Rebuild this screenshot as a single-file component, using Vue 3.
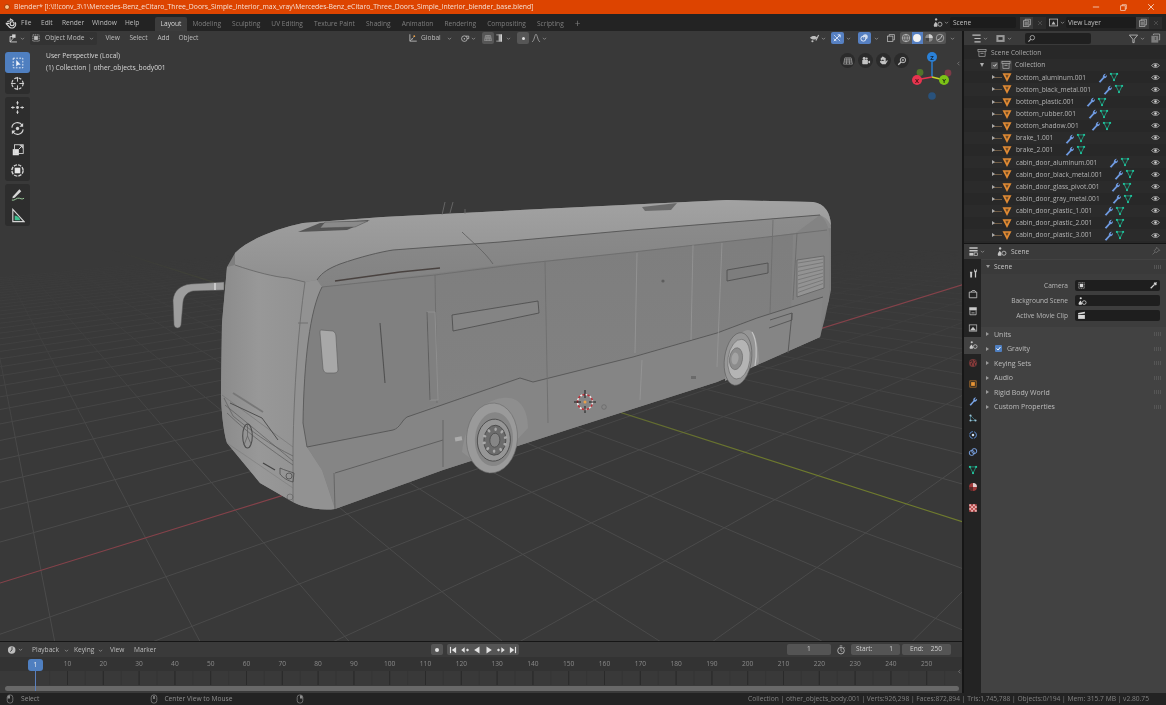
<script setup>
import { h } from 'vue'

const ICONS = {
  blender: '<circle cx="9.5" cy="9" r="2.6" stroke-width="1.5"/><path d="M1 8.5H6M3 6L8 5M6.5 2.5L11 5M13.5 7A5 5 0 1 1 4.8 12.2L1.5 8.8" stroke-width="1.6"/>',
  editor3d: '<path d="M3 13V5H9M3 13H13" stroke-width="1.3"/><rect x="6" y="2" width="5" height="5" fill="currentColor" stroke="none"/><path d="M3 13L8 7" stroke-width="1.2"/>',
  objmode: '<rect x="3" y="3" width="10" height="10" stroke-width="1.2" stroke-dasharray="2 1"/><rect x="5" y="5" width="6" height="6" fill="currentColor" stroke="none"/>',
  global: '<path d="M3 2V13H14" stroke-width="1.4"/><path d="M3 13L9 7" stroke-width="1"/><circle cx="10" cy="5" r="1.5" fill="#e8a04a" stroke="none"/><circle cx="6.5" cy="9.5" r="1" fill="currentColor" stroke="none"/>',
  snap: '<circle cx="7" cy="9" r="4.5" stroke-width="1.3"/><path d="M9 5H14V9H11" stroke-width="1.3"/><circle cx="7" cy="9" r="1.2" fill="currentColor" stroke="none"/>',
  curve: '<path d="M1.5 14C5 14 6 2 8 2S11 14 14.5 14" stroke-width="1.1"/>',
  grab: '<path d="M2 3H6M2 13H6" stroke-width="1.2"/><rect x="6" y="2" width="5" height="12" fill="#e6e6e6" stroke="none"/><path d="M8 1V15" stroke="#333" stroke-width="1"/>',
  gizview: '<path d="M1.5 7C4 3.5 10 3.5 12 7C10 10.5 4 10.5 1.5 7Z" fill="currentColor" stroke="none"/><path d="M10 11L14 3" stroke-width="1.6"/><circle cx="5" cy="12" r="1.6" fill="currentColor" stroke="none"/>',
  overlay: '<circle cx="7" cy="9" r="4" stroke-width="1.5"/><circle cx="10" cy="6" r="4" fill="#cfdcf0" stroke="none"/><circle cx="8.5" cy="8" r="1.6" fill="#5d7fb8" stroke="none"/>',
  arrows: '<path d="M3 13L13 3M9 3H13V7M3 9L7 13" stroke-width="1.5"/><path d="M3 3L13 13" stroke-width="1.1"/>',
  xray: '<rect x="2.5" y="5" width="8.5" height="8.5" stroke-width="1.2"/><path d="M5 5V2.5H13.5V11H11" stroke-width="1.2"/>',
  wire: '<circle cx="8" cy="8" r="6" stroke-width="1.1"/><path d="M2 8H14M8 2C5 5 5 11 8 14M8 2C11 5 11 11 8 14" stroke-width=".9"/>',
  solid: '<circle cx="8" cy="8" r="6.3" fill="#f2f2f2" stroke="none"/>',
  matprev: '<circle cx="8" cy="8" r="6" fill="#8b8b8b" stroke="none"/><path d="M8 2A6 6 0 0 1 14 8H8Z" fill="#d0d0d0" stroke="none"/><path d="M2 8A6 6 0 0 0 8 14V8Z" fill="#444" stroke="none"/>',
  rendered: '<circle cx="8" cy="8" r="6" fill="#555" stroke-width="1"/><path d="M4 11C8 10 10 8 11 4" stroke-width="1.4"/>',
  grid: '<path d="M3 3H13L15 13H1ZM6.3 3L5.5 13M9.6 3L10.5 13M2.4 6.3H13.6M1.7 9.6H14.3" stroke-width=".9"/>',
  camera: '<rect x="2" y="6" width="9" height="7" rx="1" fill="currentColor" stroke="none"/><circle cx="5" cy="4" r="2.3" fill="currentColor" stroke="none"/><circle cx="9" cy="4" r="1.8" fill="currentColor" stroke="none"/><path d="M11 9L14.5 7V12L11 10Z" fill="currentColor" stroke="none"/>',
  hand: '<path d="M4 8V4.5a.9.9 0 0 1 1.8 0V8M5.8 7V3a.9.9 0 0 1 1.8 0V7M7.6 7V3.3a.9.9 0 0 1 1.8 0V8M9.4 8V4.8a.9.9 0 0 1 1.8 0V10L13 7.8C14 7.5 14.3 8.5 13.8 9L11 13.5H6L3 10.5C2.5 9.5 3.3 8.5 4 9Z" fill="currentColor" stroke="none"/>',
  zoom: '<circle cx="9.5" cy="6.5" r="4.3" stroke-width="1.5"/><path d="M6.5 9.5L2 14" stroke-width="2"/><path d="M7.5 6.5H11.5M9.5 4.5V8.5" stroke-width="1.2"/>',
  select: '<rect x="2.5" y="2.5" width="11" height="11" stroke-width="1" stroke-dasharray="2 1.5"/><path d="M6 4.5V12L8 10H11Z" fill="currentColor" stroke="none"/>',
  cursor: '<circle cx="8" cy="8" r="6" stroke-width="1.2" stroke-dasharray="3 1.8"/><path d="M8 1V6M8 10V15M1 8H6M10 8H15" stroke-width="1"/>',
  move: '<path d="M8 5V1.5M8 11V14.5M5 8H1.5M11 8H14.5" stroke-width="1"/><path d="M8 1L6.5 3.5H9.5ZM8 15L6.5 12.5H9.5ZM1 8L3.5 6.5V9.5ZM15 8L12.5 6.5V9.5Z" fill="currentColor" stroke="none"/><circle cx="8" cy="8" r="1.5" fill="currentColor" stroke="none"/>',
  rotate: '<path d="M2 7A6 6 0 0 1 13 4.5M14 9A6 6 0 0 1 3 11.5" stroke-width="1.2"/><path d="M14 2V6H10ZM2 14V10H6Z" fill="currentColor" stroke="none"/><circle cx="8" cy="8" r="1.8" fill="currentColor" stroke="none"/>',
  scale: '<rect x="2" y="7" width="7" height="7" fill="#e2e2e2" stroke="none"/><rect x="4" y="2" width="10" height="10" stroke-width="1"/><path d="M9 7L13 3M10 3H13V6" stroke-width="1.1"/>',
  transform: '<circle cx="8" cy="8" r="6" stroke-width="1.5" stroke-dasharray="3.5 1.2"/><rect x="5" y="5" width="6" height="6" fill="#e6e6e6" stroke="none"/>',
  annotate: '<path d="M3 10L10 2.5L12 4.5L5 11.5L2.5 12Z" fill="currentColor" stroke="none"/><path d="M2 14C5 15 7 11 10 12S13 13 15 12" stroke="#9fd0a0" stroke-width="1"/>',
  measure: '<path d="M3 1.5V14.5H15Z" stroke-width="1.2"/><path d="M5 8A7 7 0 0 1 11 13H5Z" fill="#3fbf8f" stroke="none"/>',
  mesh: '<path d="M3 3.2H13L8 13Z" stroke-width="2.7" stroke-linejoin="miter" fill="#6d4a25"/>',
  meshData: '<path d="M3 3H13L8 13Z" stroke-width="1.1"/><g fill="currentColor" stroke="none"><rect x="1.5" y="1.5" width="3" height="3"/><rect x="11.5" y="1.5" width="3" height="3"/><rect x="6.5" y="11.5" width="3" height="3"/></g>',
  wrench: '<path d="M2.5 14L8.5 7.5C8 5.5 9.5 2.5 13 2.5L10.8 5L12 6.5L14.5 4.5C14.8 7.5 12.5 9.5 10.5 9L4.8 15.5Z" fill="currentColor" stroke="none"/>',
  eye: '<path d="M1.2 8C4 3.5 12 3.5 14.8 8C12 12.5 4 12.5 1.2 8Z" stroke-width="1.3"/><circle cx="8" cy="8" r="2.3" fill="currentColor" stroke="none"/>',
  collection: '<rect x="1.5" y="2.5" width="13" height="3" stroke-width="1.1"/><path d="M3 5.5V13.5H13V5.5" stroke-width="1.1"/><path d="M5.5 8.5H10.5" stroke-width="1.3"/>',
  outl: '<path d="M2 3H14M5 8H14M5 13H14" stroke-width="1.8"/>',
  layers: '<rect x="2" y="3" width="12" height="10" fill="currentColor" stroke="none" opacity=".75"/><rect x="5" y="6" width="6" height="4" fill="#333" stroke="none"/>',
  mag: '<circle cx="9.5" cy="6.5" r="4" stroke-width="1.3"/><path d="M6.5 9.5L2.5 13.5" stroke-width="1.8"/>',
  filter: '<path d="M2 3H14L9 9V14H7V9Z" stroke-width="1.2"/>',
  newc: '<rect x="2" y="4" width="10" height="10" fill="currentColor" stroke="none" opacity=".55"/><path d="M5 3V1.5H14V10H12.5" stroke-width="1.1"/><path d="M7 7H9M7 9H9" stroke="#222" stroke-width="1"/>',
  newdoc: '<rect x="2.5" y="4.5" width="8.5" height="9" stroke-width="1.1"/><path d="M5 4.5V2H13.5V11H11" stroke-width="1.1"/><rect x="4" y="6" width="5.5" height="6" fill="currentColor" stroke="none" opacity=".5"/>',
  x: '<path d="M4 4L12 12M12 4L4 12" stroke-width="1.3"/>',
  scene: '<path d="M3 14C1.5 11 4 9 5.5 7C7 9 9 11 7.5 14Z" fill="currentColor" stroke="none"/><circle cx="6" cy="3.5" r="1.7" fill="currentColor" stroke="none"/><circle cx="11.5" cy="10.5" r="3" stroke-width="1.2"/>',
  viewlayer: '<rect x="2" y="3" width="12" height="10" stroke-width="1.1"/><path d="M5 11L8 6L11 11Z" fill="currentColor" stroke="none"/>',
  props: '<path d="M2 3H14M2 7H14" stroke-width="2.2"/><rect x="2" y="10" width="6" height="4" fill="currentColor" stroke="none"/><rect x="9" y="10" width="5" height="4" stroke-width="1"/>',
  pin: '<path d="M9 2L14 7L11 8L8.5 11L5 7.5L8 5ZM6.5 9.5L2.5 13.5" stroke-width="1.1"/>',
  tool: '<path d="M5 1V6M3 6H7L6.5 9V15H3.5V9ZM11 1C9 3 9.5 6 11 7V15H13V7C14.5 6 15 3 13 1V4.5H11Z" fill="currentColor" stroke="none"/>',
  render: '<path d="M2 5H14V14H2ZM5 5L7 2.5H11L12.5 5" stroke-width="1.3"/>',
  output: '<path d="M2 2H14V7H2Z" fill="currentColor" stroke="none"/><path d="M3 7V14H13V7M5.5 11H10.5" stroke-width="1.2"/>',
  vlayer: '<rect x="2" y="3" width="12" height="10" stroke-width="1.1"/><path d="M3 12L8 6L13 12" fill="currentColor" stroke="none"/>',
  world: '<circle cx="8" cy="8" r="6.3" fill="#8a3a3a" stroke="#333" stroke-width=".5"/><path d="M3 6L7 4L8 7L5 9L6 12M10 3L13 6L10 9L11 13" stroke="#222" stroke-width="1.3"/>',
  object: '<rect x="3" y="3" width="10" height="10" stroke="#d98a2f" stroke-width="1"/><rect x="5" y="5" width="6" height="6" fill="#e89535" stroke="none"/>',
  modifier: '<path d="M2.5 14L8.5 7.5C8 5 9.5 2 13 2.5L10.5 5L11.5 6.5L14.5 4.5C15 7.5 12.5 9.8 10 9L4.5 15.5Z" fill="#79a4e6" stroke="none"/>',
  particles: '<path d="M4 4L12 12M4 4V12H12" stroke="#4d8fa0" stroke-width="1"/><g fill="#9cc3d6" stroke="none"><circle cx="4" cy="4" r="1.7"/><circle cx="12" cy="12" r="1.7"/><circle cx="4" cy="12" r="1.7"/></g>',
  physics: '<circle cx="8" cy="8" r="5.5" stroke="#5d8fd8" stroke-width="1.5" stroke-dasharray="7 2"/><circle cx="8" cy="8" r="2" fill="#cfe0f5" stroke="none"/>',
  constraints: '<circle cx="6" cy="9.5" r="4" stroke="#7da7ea" stroke-width="1.5"/><circle cx="10" cy="6.5" r="4" stroke="#7da7ea" stroke-width="1.5"/>',
  data: '<path d="M3 3H13L8 13Z" stroke="#22c7a0" stroke-width="1"/><g fill="#22c7a0" stroke="none"><rect x="1.5" y="1.5" width="3" height="3"/><rect x="11.5" y="1.5" width="3" height="3"/><rect x="6.5" y="11.5" width="3" height="3"/></g>',
  material: '<circle cx="8" cy="8" r="6.3" fill="#a03a3a" stroke="none"/><path d="M8 1.7A6.3 6.3 0 0 1 14.3 8H8Z" fill="#e0d0d0" stroke="none"/><path d="M1.7 8A6.3 6.3 0 0 0 8 14.3V8Z" fill="#5a2a2a" stroke="none"/>',
  texture: '<rect x="2" y="2" width="12" height="12" fill="#b84a4a" stroke="none"/><g fill="#e5b0b0" stroke="none"><rect x="2" y="2" width="3" height="3"/><rect x="8" y="2" width="3" height="3"/><rect x="5" y="5" width="3" height="3"/><rect x="11" y="5" width="3" height="3"/><rect x="2" y="8" width="3" height="3"/><rect x="8" y="8" width="3" height="3"/><rect x="5" y="11" width="3" height="3"/><rect x="11" y="11" width="3" height="3"/></g>',
  camdata: '<rect x="3" y="3" width="10" height="10" stroke-width="1" stroke-dasharray="2 1"/><rect x="5" y="5" width="6" height="6" fill="currentColor" stroke="none"/>',
  dropper: '<path d="M3 13L10 6" stroke-width="2.2"/><path d="M9 3L13 7M11 5L13.5 2.5" stroke-width="2.4"/>',
  clip: '<rect x="2" y="7" width="12" height="7" fill="currentColor" stroke="none"/><path d="M2 3.5L14 1.5V4.5L2 6Z" fill="currentColor" stroke="none"/>',
  timeline: '<circle cx="7.5" cy="8" r="6" fill="currentColor" stroke="none"/><path d="M8 3.5V8L5 10.5" stroke="#333" stroke-width="1.4"/>',
  record: '<circle cx="8" cy="8" r="3.2" fill="currentColor" stroke="none"/>',
  first: '<path d="M4 3V13" stroke-width="1.8"/><path d="M13 3V13L6 8Z" fill="currentColor" stroke="none"/>',
  prevk: '<path d="M7.5 3.5V12.5L2 8ZM9.5 8L12 5.5L14.5 8L12 10.5Z" fill="currentColor" stroke="none"/>',
  back: '<path d="M12 2.5V13.5L3.5 8Z" fill="currentColor" stroke="none"/>',
  play: '<path d="M4 2.5V13.5L12.5 8Z" fill="currentColor" stroke="none"/>',
  nextk: '<path d="M8.5 3.5V12.5L14 8ZM1.5 8L4 5.5L6.5 8L4 10.5Z" fill="currentColor" stroke="none"/>',
  last: '<path d="M12 3V13" stroke-width="1.8"/><path d="M3 3V13L10 8Z" fill="currentColor" stroke="none"/>',
  stopwatch: '<circle cx="8" cy="9" r="5.3" stroke-width="1.2"/><path d="M6 1.5H10M8 5V9L10.5 11.5M12.5 3.5L14 5" stroke-width="1.1"/>',
  mouseL: '<rect x="3.5" y="1.5" width="9" height="13" rx="4" stroke-width="1.1"/><path d="M3.8 7H8V1.8C5 1.8 3.8 3.5 3.8 7Z" fill="currentColor" stroke="none"/>',
  mouseM: '<rect x="3.5" y="1.5" width="9" height="13" rx="4" stroke-width="1.1"/><rect x="6.8" y="3" width="2.4" height="5" fill="currentColor" stroke="none"/>',
  mouseR: '<rect x="3.5" y="1.5" width="9" height="13" rx="4" stroke-width="1.1"/><path d="M12.2 7H8V1.8C11 1.8 12.2 3.5 12.2 7Z" fill="currentColor" stroke="none"/>',
  min: '<path d="M3 8H13" stroke-width="1.2"/>',
  restore: '<rect x="3" y="5" width="8" height="8" stroke-width="1.2"/><path d="M5.5 5V3H13V10.5H11" stroke-width="1.2"/>',
  close: '<path d="M3.5 3.5L12.5 12.5M12.5 3.5L3.5 12.5" stroke-width="1.3"/>',
  chev: '<path d="M4.5 6.5L8 10L11.5 6.5" stroke-width="1.7"/>',
  left: '<path d="M10 4L6 8L10 12" stroke-width="1.5"/>',
  checked: '<path d="M3.5 8L7 11.5L12.5 4.5" stroke-width="2.2"/>',
}
const Ico = (props) => h('svg', {
  viewBox: '0 0 16 16',
  width: props.size || 12,
  height: props.size || 12,
  fill: 'none',
  stroke: 'currentColor',
  innerHTML: ICONS[props.name],
})
Ico.props = ['name', 'size']

const menus = ['File', 'Edit', 'Render', 'Window', 'Help']
const workspaces = ['Layout', 'Modeling', 'Sculpting', 'UV Editing', 'Texture Paint', 'Shading', 'Animation', 'Rendering', 'Compositing', 'Scripting']
const objects = ['bottom_aluminum.001', 'bottom_black_metal.001', 'bottom_plastic.001', 'bottom_rubber.001', 'bottom_shadow.001', 'brake_1.001', 'brake_2.001', 'cabin_door_aluminum.001', 'cabin_door_black_metal.001', 'cabin_door_glass_pivot.001', 'cabin_door_gray_metal.001', 'cabin_door_plastic_1.001', 'cabin_door_plastic_2.001', 'cabin_door_plastic_3.001']
const tabs = [['tool', 0], ['render', 1], ['output', 0], ['vlayer', 0], ['scene', 0], ['world', 0], ['object', 1], ['modifier', 0], ['particles', 0], ['physics', 0], ['constraints', 0], ['data', 0], ['material', 0], ['texture', 1]]
const panels = ['Units', 'Gravity', 'Keying Sets', 'Audio', 'Rigid Body World', 'Custom Properties']

// Ground grid: a homography built from the two vanishing points of the floor.
const O = [586, 401], V1 = [1412, 145], V2 = [-30, 204], A = 0.0497, B = 0.0685
const proj = (u, v) => {
  const s = u * A, t = v * B, w = 1 + s + t
  return [(O[0] + s * V1[0] + t * V2[0]) / w, (O[1] + s * V1[1] + t * V2[1]) / w]
}
const seg = (p, q) => `M${p[0].toFixed(1)} ${p[1].toFixed(1)}L${q[0].toFixed(1)} ${q[1].toFixed(1)}`
const gridD = (() => {
  let d = ''
  for (let v = -13; v <= 34; v++) {
    if (v === 0) continue
    const umin = (0.06 - 1 - v * B) / A
    d += seg(proj(umin, v), proj(60, v))
  }
  for (let u = -18; u <= 60; u++) {
    if (u === 0) continue
    const vmin = (0.06 - 1 - u * A) / B
    d += seg(proj(u, vmin), proj(u, 34))
  }
  return d
})()

const frameX = (n) => 31.7 + 3.58 * n
const labels = Array.from({ length: 25 }, (_, i) => (i + 1) * 10)
const tickD = (() => {
  let d = ''
  for (let n = 5; n <= 255; n += 5) d += `M${frameX(n).toFixed(1)} 0V14`
  return d
})()
const majorD = labels.map((n) => `M${frameX(n).toFixed(1)} 0V14`).join('')
const spokes = Array.from({ length: 10 }, (_, i) => i * 36)
const vents = Array.from({ length: 8 }, (_, i) => i)
</script>

<template>
  <div class="app">
    <div class="title">
      <span class="bl-dot"></span>
      <span class="title-text">Blender* [I:\!!!conv_3\1\Mercedes-Benz_eCitaro_Three_Doors_Simple_Interior_max_vray\Mercedes-Benz_eCitaro_Three_Doors_Simple_Interior_blender_base.blend]</span>
      <div class="winbtns">
        <Ico name="min" :size="10" /><Ico name="restore" :size="9" /><Ico name="close" :size="10" />
      </div>
    </div>

    <div class="topbar">
      <Ico class="logo" name="blender" :size="12" />
      <div class="menus"><span v-for="m in menus" :key="m">{{ m }}</span></div>
      <div class="workspaces">
        <span v-for="(w, i) in workspaces" :key="w" :class="{ on: i === 0 }">{{ w }}</span>
        <span class="plus">+</span>
      </div>
      <div class="top-right">
        <Ico name="scene" :size="11" /><Ico class="chev" name="chev" :size="7" />
        <div class="tfield scene-f">Scene</div>
        <div class="sq"><Ico name="newdoc" :size="10" /></div><div class="sq dim"><Ico name="x" :size="8" /></div>
        <Ico class="vl" name="viewlayer" :size="11" /><Ico class="chev" name="chev" :size="7" />
        <div class="tfield layer-f">View Layer</div>
        <div class="sq"><Ico name="newdoc" :size="10" /></div><div class="sq dim"><Ico name="x" :size="8" /></div>
      </div>
    </div>

    <div class="main">
      <div class="left">
        <div class="viewport">
          <svg class="scene3d" viewBox="0 31 962 610" width="962" height="610">
            <defs>
              <linearGradient id="fade" gradientUnits="userSpaceOnUse" x1="0" y1="250" x2="0" y2="470">
                <stop offset="0" stop-color="#000" />
                <stop offset="1" stop-color="#fff" />
              </linearGradient>
              <mask id="gridmask" maskUnits="userSpaceOnUse" x="0" y="31" width="962" height="610">
                <rect x="0" y="31" width="962" height="610" fill="url(#fade)" />
              </mask>
              <linearGradient id="front" x1="0" y1="0" x2="1" y2="0">
                <stop offset="0" stop-color="#8b8b8b" />
                <stop offset=".45" stop-color="#989898" />
                <stop offset="1" stop-color="#929292" />
              </linearGradient>
              <linearGradient id="roofg" x1="0" y1="0" x2="0" y2="1">
                <stop offset="0" stop-color="#a2a2a2" />
                <stop offset="1" stop-color="#8f8f8f" />
              </linearGradient>
              <linearGradient id="cant" x1="0" y1="0" x2="0" y2="1">
                <stop offset="0" stop-color="#8c8c8c" />
                <stop offset="1" stop-color="#828282" />
              </linearGradient>
              <linearGradient id="side" x1="0" y1="0" x2="0" y2="1">
                <stop offset="0" stop-color="#7d7d7d" />
                <stop offset="1" stop-color="#848484" />
              </linearGradient>
              <filter id="soft" x="-5%" y="-5%" width="110%" height="110%"><feGaussianBlur stdDeviation=".3" /></filter>
            </defs>

            <path class="gridl" :d="gridD" mask="url(#gridmask)" />
            <path d="M0 583L963 284.5" stroke="#85424a" stroke-width="1.1" fill="none" />
            <path d="M0 214L963 522" stroke="#6f7b2e" stroke-width="1.1" fill="none" mask="url(#gridmask)" />

            <g filter="url(#soft)">
              <!-- mirror arm -->
              <path d="M224 282L191 284C180 285 174 291 173 300L174 325C175 329 180 329 181 325L183 302C184 295 188 292 193 291L224 290Z" fill="#9d9d9d" stroke="#555" stroke-width=".5" />
              <rect x="214" y="283" width="2" height="7" fill="#c9c9c9" />
              <!-- body silhouette -->
              <path d="M235 253C250 238 280 228 303 223L383 217L520 210L727 200L813 202C825 204 830 212 831 225L831 290L825 318L820 337L757 365L717 382L573 428L443 470L335 509C320 511 302 507 293 502L260 483L227 443C222 425 221 400 221 390L222 323L227 267Z" fill="url(#side)" />
              <!-- roof -->
              <path d="M235 253C250 238 280 228 303 223L383 217L520 210L727 200L813 202C825 204 830 212 831 225L820 215L633 230L500 242L393 250C360 257 335 265 327 270L317 280L305 282L288 278C270 277 250 270 235 265Z" fill="url(#roofg)" />
              <!-- cant rail band -->
              <path d="M317 280L327 270C335 265 360 257 393 250L500 242L633 230L820 215C827 218 830 222 831 228L767 237L633 252L500 265L437 273L322 287Z" fill="url(#cant)" />
              <path d="M820 215C826 220 830 228 830 240L829 300L823 318L820 337L790 350L793 235Z" fill="#838383" />
              <!-- front -->
              <path d="M227 267L235 265C255 272 275 277 288 278L305 282C298 330 294 390 293 447V502L260 483L227 443C222 425 221 400 221 390L222 323Z" fill="url(#front)" />
              <!-- pillar -->
              <path d="M305 282L317 280L322 287C310 310 304 360 303 423L307 447L322 470L335 509C320 511 302 507 293 502V447C294 390 298 330 305 282Z" fill="#929292" />
              <!-- front door panel -->
              <path d="M322 287L435 275L437 403L407 417L393 430L307 447L303 423C304 360 310 310 322 287Z" fill="#808080" />
              <!-- lower skirt -->
              <path d="M307 447L393 430L407 417L520 378L533 382L633 357L717 333L757 318L823 297L820 337L757 365L717 382L573 428L443 470L335 509L322 470Z" fill="#858585" />
              <!-- wheel arches -->
              <path d="M462 452C466 422 480 400 503 398C520 396 528 410 528 428L517 440L470 458Z" fill="#8e8e8e" />
              <path d="M725 381C727 352 735 332 748 330C755 330 758 342 759 362L757 365Z" fill="#959595" />

              <!-- seams -->
              <g fill="none" stroke="#4d4d4d" stroke-width=".9">
                <path d="M235 265C255 272 275 277 288 278L305 282" stroke="#6a6a6a" />
                <path d="M317 280C322 272 330 268 340 264C360 257 380 252 393 250L500 242L633 230L820 215" stroke="#5a5a5a" stroke-width="1" />
                <path d="M322 287L435 275L520 264L633 252L767 237L827 230" stroke="#6c6c6c" />
                <path d="M335 281L400 272L440 268" stroke="#4a4340" stroke-width="1.3" />
                <path d="M307 447L393 430C400 428 402 420 407 417L520 378L533 382L633 357L717 333L757 318L823 297" stroke="#555" stroke-width=".9" />
                <path d="M322 287C310 310 304 360 303 423L307 447" stroke="#595959" />
                <path d="M305 282C298 330 294 390 293 447V502" stroke="#6e6e6e" />
                <path d="M298 323H308" stroke="#6e6e6e" />
                <path d="M435 275L437 403" stroke="#6c6c6c" />
                <path d="M335 473L443 440" stroke="#5a5a5a" />
                <path d="M443 420V467" stroke="#626262" />
                <path d="M334 473L335 509" stroke="#626262" />
                <path d="M545 262L548 423" stroke="#6e6e6e" />
                <path d="M637 253L635 353M642 360L640 400" stroke="#9a9a9a" stroke-width=".7" />
                <path d="M693 245L691 340" stroke="#9a9a9a" stroke-width=".7" />
                <path d="M722 243L717 367" stroke="#9a9a9a" stroke-width=".7" />
                <path d="M773 220L770 313" stroke="#6f6f6f" />
                <path d="M797 233L793 300" stroke="#6b6b6b" />
                <path d="M792 313L788 353" stroke="#555" />
                <path d="M770 320L792 313V320L769 328" stroke="#555" />
                <path d="M462 232C470 240 485 252 493 264" stroke="#626262" />
                <path d="M380 323L385 383" stroke="#505050" stroke-width="1.1" />
                <path d="M222 395L293 447" stroke="#6c6c6c" stroke-width=".5" />
              </g>

              <!-- roof hatch + antennas -->
              <path d="M298 232L320 223L370 220L347 230Z" fill="#555" />
              <path d="M325 222L368 221L355 227L320 228Z" fill="#8a8a8a" stroke="#444" stroke-width=".4" />
              <path d="M642 207L677 203L671 210L645 211Z" fill="#6b6b6b" />
              <path d="M442 215L445 202M450 213L453 202M465 214V209" stroke="#777" stroke-width=".7" fill="none" />

              <!-- recessed window strips -->
              <path d="M452 315L538 301L539 313L453 331Z" fill="#848484" stroke="#505050" stroke-width=".9" />
              <path d="M727 270L768 263V273L727 281Z" fill="#7d7d7d" stroke="#505050" stroke-width=".9" />
              <path d="M427 312L435 312L438 400L430 400Z" fill="#808080" stroke="#8f8f8f" stroke-width="1" />
              <path d="M427 312L430 400" stroke="#525252" stroke-width=".8" />

              <!-- rear vent -->
              <path d="M797 260L824 256V288L797 297Z" fill="#939393" stroke="#626262" stroke-width=".8" />
              <path v-for="i in vents" :key="i" :d="`M798 ${263 + i * 4.2}L823 ${259 + i * 3.5}`" stroke="#727272" stroke-width=".8" fill="none" />

              <!-- side repeater -->
              <path d="M321 330L333 331C335 332 336 334 336 337L338 370C338 372 336 373 334 373L327 373C325 373 324 372 323 369L320 333C320 331 320 330 321 330Z" fill="#a8a8a8" stroke="#5a5a5a" stroke-width=".6" />

              <!-- grille and front details -->
              <g fill="none" stroke="#5c5c5c" stroke-width=".7">
                <path d="M224 398L233 416C250 430 270 445 293 456" />
                <path d="M225 405C250 425 270 442 293 461M227 413C250 435 270 449 293 465" />
                <path d="M233 393L263 412" stroke="#777" stroke-width="1.8" />
                <path d="M230 403L262 418L278 440" stroke="#4f4f4f" stroke-width="1" />
                <ellipse cx="247.5" cy="436" rx="4.8" ry="12" stroke="#4d4d4d" stroke-width="1.1" />
                <path d="M247.5 424V436L244 445M247.5 436L251 444" stroke-width=".7" />
                <path d="M227 443L293 488" stroke="#777" stroke-width=".5" />
                <path d="M263 463L275 470" stroke="#444" stroke-width="1.2" />
                <path d="M280 468C284 470 291 472 294 473L293 482C288 481 282 477 280 474Z" stroke="#444" />
                <circle cx="289" cy="476" r="3" stroke="#444" />
                <circle cx="290" cy="497" r="3" stroke="#666" />
              </g>

              <!-- small door handles -->
              <rect x="455" y="437" width="7" height="4" fill="#ababab" transform="rotate(-10 458 439)" />
              <circle cx="663" cy="281" r="1.6" fill="#5d5d5d" />
              <rect x="691" y="376" width="5" height="3" fill="#6a6a6a" />
              <circle cx="604" cy="407" r="2.3" fill="none" stroke="#666" stroke-width=".7" />

              <!-- front wheel -->
              <g transform="rotate(4 492 438)">
                <ellipse cx="492" cy="438" rx="25.5" ry="35" fill="#9a9a9a" stroke="#6a6a6a" stroke-width=".6" />
                <ellipse cx="494" cy="439" rx="19" ry="27" fill="#868686" />
                <ellipse cx="494" cy="440" rx="16.5" ry="21" fill="#969696" stroke="#4a4a4a" stroke-width=".9" />
                <ellipse cx="495" cy="440" rx="11" ry="15" fill="#6c6c6c" stroke="#454545" stroke-width=".8" />
                <g fill="#a8a8a8">
                  <ellipse v-for="a in spokes" :key="a" cx="495" cy="440" rx="1.3" ry="1.8" :transform="`rotate(${a} 495 440) translate(0 -11)`" />
                </g>
                <ellipse cx="495" cy="440" rx="5" ry="7" fill="#868686" stroke="#4a4a4a" stroke-width=".8" />
              </g>

              <!-- rear wheel -->
              <g transform="rotate(8 738 359)">
                <ellipse cx="738" cy="359" rx="13.5" ry="26.5" fill="#979797" stroke="#5a5a5a" stroke-width=".6" />
                <ellipse cx="739" cy="359" rx="11" ry="20" fill="#b4b4b4" stroke="#666" stroke-width=".6" />
                <ellipse cx="736" cy="359" rx="6.5" ry="11" fill="#8c8c8c" stroke="#666" stroke-width=".6" />
                <ellipse cx="735" cy="359" rx="3.5" ry="6" fill="#a3a3a3" />
              </g>
              <path d="M752 332C757 340 757 355 755 366" stroke="#c4c4c4" stroke-width="1.2" fill="none" />
            </g>

            <!-- 3D cursor -->
            <g fill="none">
              <circle cx="585" cy="402" r="7.5" stroke="#f0e6e6" stroke-width="1.5" stroke-dasharray="2.5 2.5" />
              <circle cx="585" cy="402" r="7.5" stroke="#c0303a" stroke-width="1.5" stroke-dasharray="2.5 2.5" stroke-dashoffset="2.5" />
              <path d="M585 390V398M585 406V413M574 402H581M589 402H596" stroke="#1c1c1c" stroke-width="1" />
              <circle cx="585" cy="402" r="1.5" fill="#e8a04a" />
            </g>

            <!-- navigation gizmo -->
            <g class="gizmo">
              <path d="M932 77V62" stroke="#2a81d8" stroke-width="1.4" />
              <path d="M932 77L921 79" stroke="#e8344f" stroke-width="1.4" />
              <path d="M932 77L940 79" stroke="#c8d428" stroke-width="1.4" />
              <circle cx="932" cy="96" r="3.8" fill="#29527c" />
              <circle cx="920" cy="72.5" r="3.4" fill="#52752b" />
              <circle cx="948" cy="73" r="3.4" fill="#7d3b47" />
              <circle cx="932" cy="57" r="5" fill="#2a81d8" />
              <circle cx="917" cy="80" r="5" fill="#e8344f" />
              <circle cx="944" cy="80" r="5" fill="#7cc216" />
              <text x="932" y="59.5" fill="#123">Z</text>
              <text x="917" y="82.5" fill="#411">X</text>
              <text x="944" y="82.5" fill="#231">Y</text>
            </g>
          </svg>

          <!-- header overlay -->
          <div class="vp-header">
            <Ico class="ed3d" name="editor3d" :size="11" /><Ico class="chev" name="chev" :size="7" />
            <div class="modebtn"><Ico name="objmode" :size="10" /><span>Object Mode</span><Ico class="chev" name="chev" :size="7" /></div>
            <div class="vmenu"><span>View</span><span>Select</span><span>Add</span><span>Object</span></div>
            <div class="hcenter">
              <Ico name="global" :size="10" /><span class="glob">Global</span><Ico class="chev gc" name="chev" :size="7" />
              <Ico class="sn" name="snap" :size="10" /><Ico class="chev" name="chev" :size="7" />
              <div class="greybox bx1"><Ico name="grid" :size="8" /></div>
              <Ico class="gr" name="grab" :size="10" /><Ico class="chev" name="chev" :size="7" />
              <div class="greybox bx2"><span class="dotc"></span></div>
              <Ico class="cv" name="curve" :size="10" /><Ico class="chev" name="chev" :size="7" />
            </div>
            <div class="hright">
              <Ico name="gizview" :size="11" /><Ico class="chev" name="chev" :size="7" />
              <div class="bluebtn b1"><Ico name="arrows" :size="10" /></div><Ico class="chev c1" name="chev" :size="7" />
              <div class="bluebtn b2"><Ico name="overlay" :size="10" /></div><Ico class="chev c2" name="chev" :size="7" />
              <Ico class="xr" name="xray" :size="10" />
              <div class="shadeseg">
                <span><Ico name="wire" :size="10" /></span>
                <span class="act"><Ico name="solid" :size="10" /></span>
                <span><Ico name="matprev" :size="10" /></span>
                <span><Ico name="rendered" :size="10" /></span>
              </div>
              <Ico class="chev c3" name="chev" :size="7" />
            </div>
          </div>

          <div class="vp-info">
            <div>User Perspective (Local)</div>
            <div>(1) Collection | other_objects_body001</div>
          </div>

          <div class="tools">
            <div class="tgroup">
              <div class="tool active"><Ico name="select" :size="14" /></div>
              <div class="tool"><Ico name="cursor" :size="15" /></div>
            </div>
            <div class="tgroup">
              <div class="tool"><Ico name="move" :size="15" /></div>
              <div class="tool"><Ico name="rotate" :size="15" /></div>
              <div class="tool"><Ico name="scale" :size="14" /></div>
              <div class="tool"><Ico name="transform" :size="15" /></div>
            </div>
            <div class="tgroup">
              <div class="tool"><Ico name="annotate" :size="15" /></div>
              <div class="tool"><Ico name="measure" :size="15" /></div>
            </div>
          </div>

          <div class="navbtns">
            <span><Ico name="grid" :size="10" /></span>
            <span><Ico name="camera" :size="10" /></span>
            <span><Ico name="hand" :size="11" /></span>
            <span><Ico name="zoom" :size="10" /></span>
          </div>
          <Ico class="side-arrow" name="left" :size="7" />
        </div>

        <div class="timeline">
          <div class="tl-head">
            <Ico name="timeline" :size="10" /><Ico class="chev" name="chev" :size="7" />
            <div class="tl-menu">
              <span>Playback<Ico class="chev" name="chev" :size="7" /></span>
              <span>Keying<Ico class="chev" name="chev" :size="7" /></span>
              <span>View</span>
              <span>Marker</span>
            </div>
            <div class="transport">
              <div class="rec"><Ico name="record" :size="10" /></div>
              <div class="tbtns">
                <Ico name="first" :size="10" /><Ico name="prevk" :size="10" /><Ico name="back" :size="10" /><Ico name="play" :size="10" /><Ico name="nextk" :size="10" /><Ico name="last" :size="10" />
              </div>
            </div>
            <div class="frames">
              <div class="nf cur">1</div>
              <Ico class="sw" name="stopwatch" :size="10" />
              <div class="nf start"><span>Start:</span><span>1</span></div>
              <div class="nf end"><span>End:</span><span>250</span></div>
            </div>
          </div>
          <div class="tl-ruler">
            <span v-for="n in labels" :key="n" class="tl-num" :style="{ left: frameX(n) + 'px' }">{{ n }}</span>
            <span class="tl-cur">1</span>
          </div>
          <div class="tl-track">
            <svg width="962" height="14">
              <path :d="tickD" stroke="#353535" fill="none" />
              <path :d="majorD" stroke="#2a2a2a" fill="none" />
            </svg>
            <span class="tl-line"></span>
          </div>
          <div class="tl-scroll"><span class="tl-thumb"></span></div>
          <Ico class="tl-arrow" name="left" :size="7" />
        </div>
      </div>

      <div class="right">
        <div class="outliner">
          <div class="ol-head">
            <Ico name="outl" :size="11" /><Ico class="chev" name="chev" :size="7" />
            <Ico class="ol-dm" name="layers" :size="11" /><Ico class="chev" name="chev" :size="7" />
            <div class="ol-search"><Ico name="mag" :size="9" /></div>
            <Ico class="ol-filter" name="filter" :size="11" /><Ico class="chev" name="chev" :size="7" />
            <Ico class="ol-new" name="newc" :size="11" />
          </div>
          <div class="ol-rows">
            <div class="orow root"><Ico class="coll-i" name="collection" :size="10" /><span class="rtext">Scene Collection</span></div>
            <div class="orow coll">
              <span class="disc"></span>
              <span class="cbx"><Ico name="checked" :size="6" /></span>
              <span class="collbox"><Ico name="collection" :size="10" /></span>
              <span class="rtext">Collection</span>
              <Ico class="eye" name="eye" :size="9" />
            </div>
            <div v-for="o in objects" :key="o" class="orow item">
              <span class="branch"></span>
              <Ico class="obj-i" name="mesh" :size="10" />
              <span class="oname rtext">{{ o }}</span>
              <Ico class="wr-i" name="wrench" :size="11" />
              <Ico class="md-i" name="meshData" :size="10" />
              <Ico class="eye" name="eye" :size="9" />
            </div>
          </div>
        </div>

        <div class="properties">
          <div class="pr-head">
            <Ico name="props" :size="11" /><Ico class="chev" name="chev" :size="7" />
            <Ico class="pr-sc" name="scene" :size="11" /><span class="rtext">Scene</span>
            <Ico class="pr-pin" name="pin" :size="10" />
          </div>
          <div class="pr-body">
            <div class="pr-tabs">
              <div v-for="t in tabs" :key="t[0]" class="ptab" :class="[{ on: t[0] === 'scene', gap: t[1] }]"><Ico :name="t[0]" :size="10" /></div>
            </div>
            <div class="pr-main">
              <div class="pn-title"><span class="tri down"></span><span class="rtext">Scene</span><span class="grip"></span></div>
              <div class="pn-body">
                <div class="fld"><label class="rtext">Camera</label><div class="inp"><Ico name="camdata" :size="9" /><Ico class="drop" name="dropper" :size="9" /></div></div>
                <div class="fld"><label class="rtext">Background Scene</label><div class="inp"><Ico name="scene" :size="10" /></div></div>
                <div class="fld"><label class="rtext">Active Movie Clip</label><div class="inp"><Ico name="clip" :size="9" /></div></div>
              </div>
              <div v-for="p in panels" :key="p" class="pn-row">
                <span class="tri"></span>
                <span v-if="p === 'Gravity'" class="chk"><Ico name="checked" :size="7" /></span>
                <span>{{ p }}</span>
                <span class="grip"></span>
              </div>
            </div>
          </div>
        </div>
      </div>
    </div>

    <div class="status">
      <Ico name="mouseL" :size="10" /><span class="st1">Select</span>
      <Ico class="st-m" name="mouseM" :size="10" /><span class="st2">Center View to Mouse</span>
      <Ico class="st-r" name="mouseR" :size="10" />
      <span class="stats">Collection | other_objects_body.001 | Verts:926,298 | Faces:872,894 | Tris:1,745,788 | Objects:0/194 | Mem: 315.7 MB | v2.80.75</span>
    </div>
  </div>
</template>

<style>
html, body { margin: 0; background: #161616; overflow: hidden; }
</style>

<style scoped>
.app {
  width: 1166px; height: 705px; display: flex; flex-direction: column; overflow: hidden;
  font-family: "Open Sans", "Noto Sans", sans-serif; font-size: 6.6px; color: #bdbdbd; background: #161616;
  line-height: 1; filter: blur(.3px);
}
svg { display: block; flex: none; }
.chev { color: #9a9a9a; }
.rtext { padding-top: 1px; }

.title { height: 14px; flex: none; background: #dd4400; display: flex; align-items: center; color: #f6e0d4; padding-left: 4px; font-size: 6.85px; }
.bl-dot { width: 6px; height: 6px; border-radius: 50%; background: #f6c08a; border: 1px solid #a83a00; box-sizing: border-box; }
.title-text { margin-left: 4px; white-space: nowrap; }
.winbtns { margin-left: auto; display: flex; gap: 18px; padding-right: 10px; align-items: center; color: #f7e5da; }

.topbar { height: 17px; flex: none; background: #232323; display: flex; align-items: center; padding-left: 5px; }
.logo { color: #d8d8d8; }
.menus { display: flex; margin-left: 4px; width: 134px; padding-top: 1px; }
.menus span:nth-child(1) { width: 20px; }
.menus span:nth-child(2) { width: 21px; }
.menus span:nth-child(3) { width: 30px; }
.menus span:nth-child(4) { width: 33px; }
.workspaces { display: flex; align-items: center; height: 17px; color: #7e7e7e; }
.workspaces span { padding: 0 5.55px; line-height: 15px; height: 14px; white-space: nowrap; }
.workspaces .on { background: #3c3c3c; color: #d6d6d6; border-radius: 2px 2px 0 0; margin-top: 3px; line-height: 13px; }
.workspaces .plus { font-size: 10px; }
.top-right { margin-left: auto; display: flex; align-items: center; padding-right: 4px; }
.tfield { height: 11px; background: #1c1c1c; border-radius: 2px; line-height: 11px; padding-left: 3px; box-sizing: border-box; color: #c0c0c0; }
.scene-f { width: 66px; margin-right: 4px; }
.layer-f { width: 70px; padding-left: 2px; }
.sq { width: 13px; height: 12px; background: #3c3c3c; display: flex; align-items: center; justify-content: center; color: #b8b8b8; }
.sq.dim { background: #2c2c2c; color: #5c5c5c; }
.vl { margin-left: 2px; }

.main { flex: 1; display: flex; min-height: 0; }
.left { width: 962px; flex: none; display: flex; flex-direction: column; }
.right { flex: 1; margin-left: 2px; display: flex; flex-direction: column; }

.viewport { position: relative; height: 610px; flex: none; background: #393939; overflow: hidden; }
.scene3d { position: absolute; left: 0; top: 0; }
.gridl { stroke: #4b4b4b; stroke-width: 1; fill: none; }
.gizmo text { font: 700 6px "Open Sans", sans-serif; text-anchor: middle; }

.vp-header { position: absolute; left: 0; top: 0; right: 0; height: 14px; display: flex; align-items: center; padding-left: 8px; }
.ed3d { color: #d0d0d0; }
.modebtn { display: flex; align-items: center; height: 13px; margin-left: 4px; padding: 0 2px 0 1px; background: #333; border-radius: 2px; gap: 4px; white-space: nowrap; }
.modebtn span { padding-top: 1px; }
.vmenu { display: flex; height: 13px; align-items: center; margin-left: 8px; padding-top: 1px; }
.vmenu span:nth-child(1) { width: 24px; }
.vmenu span:nth-child(2) { width: 28px; }
.vmenu span:nth-child(3) { width: 21px; }
.hcenter { position: absolute; left: 408px; top: 0; height: 14px; display: flex; align-items: center; }
.glob { margin-left: 3px; width: 25px; padding-top: 1px; }
.sn { margin-left: 7px; }
.greybox { width: 12px; height: 12px; background: #565656; border-radius: 2px; display: flex; align-items: center; justify-content: center; }
.bx1 { margin-left: 5px; }
.gr { margin-left: 1px; }
.bx2 { margin-left: 5px; }
.dotc { width: 3px; height: 3px; border-radius: 50%; background: #ddd; }
.cv { margin-left: 2px; }
.hright { position: absolute; left: 808.5px; top: 0; height: 14px; display: flex; align-items: center; }
.bluebtn { width: 13px; height: 12px; background: #5680c2; border-radius: 2px; display: flex; align-items: center; justify-content: center; color: #e6eefb; }
.b1 { margin-left: 4px; }
.c1 { margin-left: 1px; }
.b2 { margin-left: 6px; }
.c2 { margin-left: 2px; }
.xr { margin-left: 6.5px; color: #bdbdbd; }
.c3 { margin-left: 2.5px; }
.shadeseg { display: flex; margin-left: 4px; background: #545454; border-radius: 2px; }
.shadeseg span { width: 11.5px; height: 12px; display: flex; align-items: center; justify-content: center; color: #c8c8c8; }
.shadeseg .act { background: #5680c2; }

.vp-info { position: absolute; left: 46px; top: 19px; color: #d8d8d8; font-size: 6.7px; line-height: 12px; }

.tools { position: absolute; left: 5px; top: 21px; display: flex; flex-direction: column; gap: 3px; }
.tgroup { background: #2d2d2d; border-radius: 3px; display: flex; flex-direction: column; width: 25px; }
.tool { height: 21px; display: flex; align-items: center; justify-content: center; color: #d6d6d6; border-radius: 3px; }
.tool.active { background: #4f7fc0; color: #f2f6fc; }

.navbtns { position: absolute; left: 840px; top: 22px; display: flex; gap: 3px; }
.navbtns span { width: 15px; height: 15px; border-radius: 50%; background: #2b2b2b; display: flex; align-items: center; justify-content: center; color: #c4c4c4; }
.side-arrow { position: absolute; left: 955px; top: 29px; color: #8a8a8a; }

.timeline { position: relative; margin-top: 1px; flex: 1; background: #3a3a3a; display: flex; flex-direction: column; }
.tl-head { height: 15px; flex: none; display: flex; align-items: center; padding-left: 7px; position: relative; background: #3a3a3a; }
.tl-menu { display: flex; margin-left: 8px; align-items: center; }
.tl-menu span { display: flex; align-items: center; gap: 4px; white-space: nowrap; padding-top: 1px; }
.tl-menu span:nth-child(1) { width: 42px; }
.tl-menu span:nth-child(2) { width: 36px; gap: 2.5px; }
.tl-menu span:nth-child(3) { width: 24px; }
.transport { position: absolute; left: 431px; top: 2px; display: flex; gap: 4px; }
.rec { width: 12px; height: 11px; background: #555; border-radius: 2px; display: flex; align-items: center; justify-content: center; color: #e2e2e2; }
.tbtns { display: flex; background: #555; border-radius: 2px; height: 11px; align-items: center; color: #e2e2e2; padding: 0 1px; gap: 2px; }
.frames { position: absolute; left: 787px; top: 2px; display: flex; align-items: center; height: 11px; color: #cfcfcf; }
.nf { height: 11px; background: #545454; border-radius: 2px; display: flex; align-items: center; box-sizing: border-box; }
.nf.cur { width: 44px; justify-content: center; }
.sw { margin: 0 5px; }
.nf.start { width: 49px; justify-content: space-between; padding: 0 7px 0 5px; }
.nf.end { width: 49px; margin-left: 2px; justify-content: space-between; padding: 0 9px 0 8px; }
.tl-ruler { height: 14px; flex: none; position: relative; background: #333; }
.tl-num { position: absolute; top: 4px; transform: translateX(-50%); color: #8a8a8a; }
.tl-cur { position: absolute; left: 28px; top: 2px; width: 15px; height: 12px; background: #4f7fc0; border-radius: 3px; text-align: center; line-height: 12px; color: #f0f0f0; }
.tl-track { height: 14px; flex: none; position: relative; background: #393939; }
.tl-line { position: absolute; left: 34.5px; top: 0; width: 1px; height: 20px; background: #5a7fbc; }
.tl-scroll { flex: 1; padding: 1px 3px 0 5px; }
.tl-thumb { display: block; height: 5px; background: #686868; border-radius: 3px; }
.tl-arrow { position: absolute; left: 956px; top: 26px; color: #8a8a8a; }

.outliner { height: 212px; flex: none; background: #282828; display: flex; flex-direction: column; overflow: hidden; }
.ol-head { height: 14px; flex: none; background: #3a3a3a; display: flex; align-items: center; padding-left: 7px; }
.ol-dm { margin-left: 5.5px; color: #b8b8b8; }
.ol-search { margin-left: 12.5px; width: 66px; height: 11px; background: #202020; border-radius: 2px; display: flex; align-items: center; padding-left: 2px; box-sizing: border-box; }
.ol-filter { margin-left: 36.5px; }
.ol-new { margin-left: 4px; color: #b4b4b4; }
.ol-rows { padding-top: 2px; }
.orow { height: 12.15px; display: flex; align-items: center; position: relative; white-space: nowrap; color: #b4b4b4; box-sizing: border-box; }
.orow:nth-child(even) { background: #2b2b2b; }
.root { padding-left: 13px; color: #a8a8a8; }
.coll-i { margin-right: 4px; }
.coll { padding-left: 16px; }
.disc { width: 0; height: 0; border-left: 2.5px solid transparent; border-right: 2.5px solid transparent; border-top: 4px solid #b0b0b0; }
.cbx { width: 7px; height: 7px; margin-left: 7px; background: #555; border-radius: 1px; display: flex; align-items: center; justify-content: center; color: #eee; }
.collbox { width: 12px; height: 11px; margin-left: 2px; margin-right: 3px; background: #3f3f3f; display: flex; align-items: center; justify-content: center; border-radius: 2px; }
.eye { position: absolute; left: 187px; top: 1.5px; color: #d4d4d4; }
.branch { position: absolute; left: 29px; top: 6px; width: 9px; height: 1px; background: #6f5b44; }
.branch::before { content: ''; position: absolute; left: -1px; top: -2px; border-left: 3px solid #aaa; border-top: 2.5px solid transparent; border-bottom: 2.5px solid transparent; }
.item { padding-left: 38px; }
.obj-i { color: #e08a34; }
.oname { margin-left: 4px; }
.wr-i { margin-left: 11px; color: #6f9ae0; }
.md-i { margin-left: 1px; color: #1fc39c; }

.properties { margin-top: 1px; flex: 1; background: #424242; display: flex; flex-direction: column; min-height: 0; }
.pr-head { height: 15px; flex: none; background: #3a3a3a; display: flex; align-items: center; padding-left: 4px; position: relative; color: #c4c4c4; }
.pr-sc { margin: 0 4px 0 10px; }
.pr-pin { position: absolute; right: 5px; top: 2px; color: #777; }
.pr-body { flex: 1; display: flex; min-height: 0; }
.pr-tabs { width: 17px; flex: none; background: #232323; padding-top: 5px; box-sizing: border-box; }
.ptab { height: 17.2px; display: flex; align-items: center; justify-content: center; color: #c8c8c8; }
.ptab.gap { margin-top: 4px; }
.ptab.on { background: #424242; }
.pr-main { flex: 1; min-width: 0; }
.pn-title { height: 14px; background: #3a3a3a; display: flex; align-items: center; padding-left: 5px; position: relative; margin-top: 1px; color: #c8c8c8; }
.tri { width: 0; height: 0; border-left: 3.5px solid #9a9a9a; border-top: 2.5px solid transparent; border-bottom: 2.5px solid transparent; margin-right: 5px; flex: none; }
.tri.down { border-left: 2.5px solid transparent; border-right: 2.5px solid transparent; border-top: 3.5px solid #9a9a9a; margin-right: 4px; }
.grip { position: absolute; right: 4px; top: 5px; width: 8px; height: 4px; background: repeating-linear-gradient(90deg, #555 0 1px, transparent 1px 2px); }
.pn-body { background: #3d3d3d; padding: 6px 6px 6px 0; display: flex; flex-direction: column; gap: 4px; }
.fld { display: flex; align-items: center; height: 11px; }
.fld label { width: 94px; text-align: right; padding-right: 7px; box-sizing: border-box; color: #b8b8b8; white-space: nowrap; }
.inp { flex: 1; height: 11px; background: #1e1e1e; border-radius: 2px; display: flex; align-items: center; padding: 0 2px; justify-content: space-between; color: #d8d8d8; }
.pn-row { height: 14.5px; display: flex; align-items: center; padding-left: 5px; position: relative; color: #bdbdbd; font-size: 7px; }
.chk { width: 7px; height: 7px; background: #4f7fc0; border-radius: 1px; display: flex; align-items: center; justify-content: center; color: #fff; margin: 0 5px 0 1px; }

.status { height: 12px; flex: none; background: #232323; display: flex; align-items: center; padding-left: 5px; position: relative; color: #8f8f8f; font-size: 6.68px; }
.st1 { margin-left: 6px; }
.st-m { margin-left: 110px; }
.st2 { margin-left: 5px; }
.st-r { margin-left: 62px; }
.stats { position: absolute; right: 17px; top: 3px; white-space: nowrap; color: #828282; }
</style>
